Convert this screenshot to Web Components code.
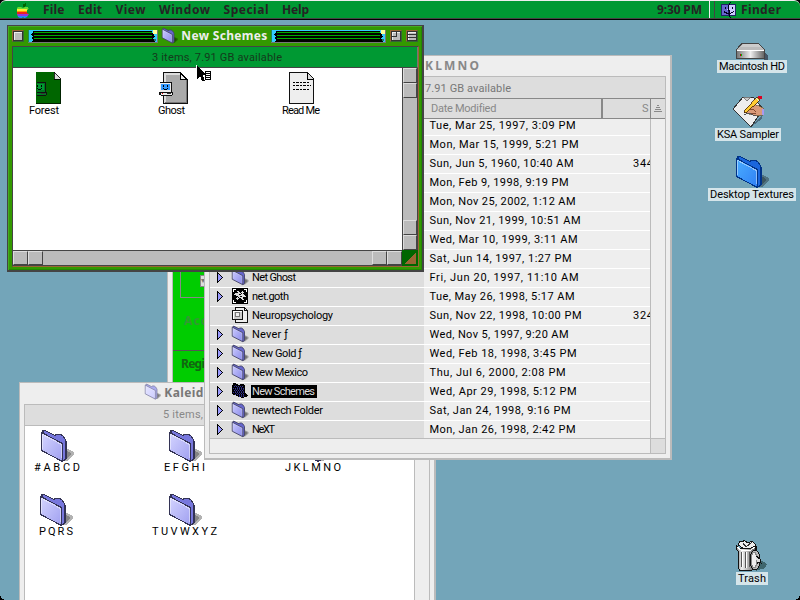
<!DOCTYPE html>
<html lang="en">
<head>
<meta charset="utf-8">
<title>Finder</title>
<style>
html,body{margin:0;width:800px;height:600px;overflow:hidden;background:#73a5b9}
</style>
</head>
<body>
<mac-desktop></mac-desktop>
<script>
const folder=(a,b,c,o,s)=>`<defs><linearGradient id="f" x2="1" y2="1"><stop stop-color="${a}"/><stop offset="1" stop-color="${b}"/></linearGradient></defs><path d="M25 18l8 4v3l-7 6h-4z" fill="#000" opacity=".3"/><path d="M25 20l5 3v2l-5 4z" fill="#000" opacity=".25"/><path d="M2 .6h2l10 5 1-1.500h4l3 2 2 3 1 2v18l-3 2-2-1L2 9z" fill="${c}" stroke="${o}" stroke-width="${s}"/><path d="M.5 2.500L21.500 13.500V31.500L.5 20.500z" fill="url(#f)" stroke="${o}" stroke-width="${s}"/><path d="M1.800 19V4.500l18.200 9.800v14" fill="none" stroke="#fff" opacity=".45"/>`;
const face=(a,b,x,y,k='#d00')=>`<g transform="translate(${x} ${y})"><path d="M1 0h11l1 1v9h1v3h-1v1H2v-1H0v-3h1z" fill="#111"/><path d="M1 1h11v9H1z" fill="${b}"/><path d="M2 2h9v6H2z" fill="${a}"/><path d="M4 3h1v2H4zM8 3h1v2H8zM4 6h1v1H4zM5 7h3v1H5zM8 6h1v1H8z" fill="#000"/><path d="M2 11h11v2H2z" fill="${b}"/><path d="M3 11h1v1H3z" fill="${k}"/><path d="M8 11h4v1H8z" fill="#333"/></g>`;
const ICONS={
 folder:[32,32,folder('#d5d5ff','#9f9ff0','#7777dd','#335',1.1)],
 blue:[32,32,folder('#4aadff','#3080f5','#1a66dd','#003388',1.1)],
 small:[32,32,folder('#ccccff','#8888e8','#6666cc','#446',1.8)],
 faded:[32,32,folder('#e6e6ff','#ccccff','#aaaaee','#8888aa',1.8)],
 selected:[16,16,`<path d="M0 2h1V0h2l4 2h1V1h3l2 2v7l2 1 1 2-2 1h-2v1h-2l-3-1-2-1-3-1-2-1z" fill="#000"/><path d="M2 3.500h9M1 5.500h11M2 7.500h10M1 9.500h11M3 11.500h9M7 13.500h6" stroke="#339" stroke-dasharray="1 1"/><path d="M2 2.500h3M4 4.500h7M2 6.500h10M2 8.500h10M3 10.500h9M6 12.500h6" stroke="#226" stroke-dasharray="1 1" stroke-dashoffset="1"/>`],
 goth:[16,16,`<path d="M0 0h16v16H0z"/><path d="M1 1h3v1H2v2H1zM12 1h3v3h-1V2h-2zM1 12h1v2h2v1H1zM14 12h1v3h-3v-1h2z" fill="#fff"/><path d="M5 3h2l1 2 2-2 2 1-1 2 3 2-1 1h-2l1 3h-2l-2-2-3 2-1-2 2-2-4-1 1-2h3z" fill="#ddd"/><path d="M7 6h2v1H7zM8 8h2v1H8zM6 9h1v1H6zM9 5h1v1H9z"/>`],
 clip:[16,16,`<path d="M3.5.5h9l3 3v12h-12z" fill="#eee" stroke="#111"/><path d="M12.500.5v3h3" fill="none" stroke="#111"/><path d="M.5 3.500h10v9H.5z" fill="#ccc" stroke="#111"/><path d="M1 4h9v1H2v7H1z" fill="#fff"/><path d="M3.500 5.500h4v4h-4z" fill="#eee" stroke="#777"/>`],
 tri:[8,11,`<path d="M0 0l6 5v1L0 11z"/><path d="M1 2v7l3.500-3.500z" fill="#99f"/>`],
 forest:[26,32,`<path d="M0 0h18l7 8v23H0z" fill="#060"/><path d="M24.500 8v23.500H0" fill="none" stroke="#020"/><path d="M18 0l7 7h-7z" fill="#ddd" stroke="#000" stroke-width=".8"/><svg x="1" y="10" width="12" height="15">${face('#093','#072',-4,0,'#063')}</svg>`],
 ghost:[30,32,`<path d="M4.500.5h17l7 7v24h-24z" fill="#aaa" stroke="#111"/><path d="M5 1h2v30H5zM5 1h16v2H5z" fill="#ddd"/><path d="M27 8h1v23H6v-1h21z" fill="#777"/><path d="M21.500 1v6h6z" fill="#eee" stroke="#000"/>${face('#39f','#eee',0,10)}`],
 doc:[26,32,`<path d="M.5.5h18l6 6v25H.5z" fill="#eee" stroke="#111"/><path d="M18.500 1v6h6" fill="#ddd" stroke="#000"/><path d="M4 10.500h16M4 13.500h18M4 17.500h16" stroke="#000" stroke-width="1" stroke-dasharray="2 1 3 1" fill="none"/>`],
 hd:[32,17,`<defs><linearGradient id="h"><stop stop-color="#777"/><stop offset=".5" stop-color="#eee"/><stop offset="1" stop-color="#666"/></linearGradient></defs><path d="M28 9l4 4v4h-4z" fill="#456"/><path d="M5 0h18l6 7v9H0V7z" fill="#444"/><path d="M6 1h17l5 6H1z" fill="#bbb"/><path d="M7 1h15l3 3H4z" fill="#ccc"/><path d="M1 7h27v8H1z" fill="url(#h)"/><path d="M1 7h27v1H1z" fill="#fff"/><path d="M4 11h1v2H4z" fill="#b00"/><path d="M5 11h1v2H5z" fill="#0b0"/>`],
 ksa:[33,32,`<path d="M20 30l10-7v-4z" fill="#345" opacity=".6"/><path d="M11 1h10l10 12-12 18L1 13z" fill="#eee" stroke="#333"/><path d="M11 1l4 4 4-4z" fill="#ccc" stroke="#555" stroke-width=".7"/><path d="M13 16l4-6 5-2 9 4v7l-7 1-7-2z" fill="#d99a78" stroke="#653" stroke-width=".7"/><path d="M15 12l7 2 2 2M18 17l6 0" stroke="#854a30" fill="none"/><path d="M30 13h2v6h-2z" fill="#a9e"/><path d="M25 1l3 3-13 12-3 1 1-3z" fill="#fc3" stroke="#420" stroke-width=".8"/><path d="M26 0h4v3h-3z" fill="#d02"/><path d="M24 2l3 3" stroke="#eee"/><path d="M12 19l4-2 8 3" stroke="#555" fill="none"/>`],
 trash:[34,33,`<defs><linearGradient id="t"><stop stop-color="#777"/><stop offset=".3" stop-color="#eee"/><stop offset=".65" stop-color="#aaa"/><stop offset="1" stop-color="#555"/></linearGradient></defs><path d="M24 20l8 5-2 4-9 3z" fill="#244" opacity=".65"/><path d="M3 6l2-4 3 1 1-2 4 3 4-2 3 3 2 5-9 2z" fill="#eee" stroke="#111"/><path d="M8 4l3 4 6-5" fill="none" stroke="#333"/><path d="M1.500 6.500l3 3h11l5-3v4l-1 1v17l-3 3H5l-2-3V12l-2-2z" fill="url(#t)" stroke="#111"/><path d="M2 8l4 3h10l4-3" fill="none" stroke="#fff"/><path d="M6.500 13v15M10.500 13v16M14.500 13v15" stroke="#555"/><path d="M7.500 13v15M11.500 13v16" stroke="#fff"/><ellipse cx="20" cy="21" rx="5" ry="10" fill="#bbb" stroke="#111"/><ellipse cx="19" cy="21" rx="3" ry="7.500" fill="#eee" stroke="#888"/><path d="M21 17l4 3 1 4-3-1-1 2" fill="#ddd" stroke="#111"/>`],
 apple:[14,15,`<defs><clipPath id="a"><path d="M2 4h3l2 1 2-1h3v1h1l-2 2v3l2 1-2 3-2 1H8l-1-1-1 1H4l-2-1-1-3V5z"/></clipPath></defs><path d="M7 4V1l3-1v2L8 4z" fill="#060"/><g clip-path="url(#a)"><path d="M0 4h14v2H0z" fill="#6d3"/><path d="M0 6h14v2H0z" fill="#fe3"/><path d="M0 8h14v1H0z" fill="#f90"/><path d="M0 9h14v2H0z" fill="#e22"/><path d="M0 11h14v2H0z" fill="#93d"/><path d="M0 13h14v2H0z" fill="#28f"/></g>`],
 finder:[15,16,`<path d="M0 2h15v12H0z" fill="#226"/><path d="M1 3h7l-1 5v5H1z" fill="#66c"/><path d="M8 3h6v10H8V8H6z" fill="#ccf"/><path d="M4 5h1v2H4zM11 5h1v2h-1zM3 9h1v1h2v1h4v-1h2V9h1v1h-1v1h-2v1H5v-1H3z" fill="#002"/><path d="M9.500 0L7.500 4v4.500h1V14l1 2" fill="none" stroke="#002"/>`],
 cursor:[16,18,`<path d="M0 0v15h2l2-2 2 4h4l-3-6h5z" fill="#fff"/><path d="M1 1v13l3-3 2 5h3L7 10h4z"/><path d="M9 6h6v9H9z" fill="#000"/><path d="M10 7h4v1h-4zM10 9h4v1h-4zM10 11h4v1h-4zM10 13h4v1h-4z" fill="#fff"/>`],
 sort:[8,8,`<path d="M3 0h2v1H3zM2 2h4v1H2zM1 4h6v1H1zM0 6h8v1H0z" fill="#888"/>`]
};
const put=(el,html)=>{el.attachShadow({mode:'open'}).innerHTML=html};

class MacIcon extends HTMLElement{connectedCallback(){
 const [w,h,p]=ICONS[this.getAttribute('name')],s=+this.getAttribute('scale')||1;
 put(this,`<style>:host{display:block;flex:none;width:${w*s}px;height:${h*s}px}svg{display:block;overflow:visible}svg svg{overflow:hidden}</style><svg width="${w*s}" height="${h*s}" viewBox="0 0 ${w} ${h}" shape-rendering="${s===1?'crispEdges':'auto'}">${p}</svg>`)}}

/* A single line of text whose tracking is set so that it fills a given width. */
class FitText extends HTMLElement{connectedCallback(){
 const w=+this.getAttribute('w'),b=this.hasAttribute('bold');
 put(this,`<style>:host{display:block;flex:none;width:${w}px;white-space:pre;font:${b?'bold 12px/14px "Noto Sans"':'11px/14px Roboto'},sans-serif}span{display:inline-block}</style><span><slot></slot></span>`);
 const s=this.shadowRoot.querySelector('span'),n=this.textContent.length;
 s.style.letterSpacing=((w-s.getBoundingClientRect().width)/Math.max(1,n-1))+'px'}}

class MenuBar extends HTMLElement{connectedCallback(){
 put(this,`<style>:host{display:flex;box-sizing:border-box;height:20px;background:#093;border-top:1px solid #eee;border-bottom:1px solid #000;box-shadow:inset 0 -1px #444;color:#242424;border-radius:6px 6px 0 0;padding:2px 19px 0 16px}
 .l{display:flex;gap:13.500px;flex:1}.l mac-icon{margin-right:-.5px}.sep{width:1px;height:17px;margin-top:-2px;background:#eee;margin-left:7px;margin-right:4px}.sep+.sep{background:#444;margin:-2px 6px 0 0}.f{margin:-1px 5px 0 0}</style>
 <div class="l"><mac-icon name="apple"></mac-icon><fit-text bold w="21.5">File</fit-text><fit-text bold w="24">Edit</fit-text><fit-text bold w="30">View</fit-text><fit-text bold w="51">Window</fit-text><fit-text bold w="45">Special</fit-text><fit-text bold w="27">Help</fit-text></div>
 <fit-text bold w="45">9:30 PM</fit-text><i class="sep"></i><i class="sep"></i><mac-icon class="f" name="finder"></mac-icon><fit-text bold w="40">Finder</fit-text>`)}}

class TitleStripe extends HTMLElement{connectedCallback(){
 const w=+this.getAttribute('w');
 put(this,`<style>:host{display:block;flex:none;width:${w}px;height:13px}svg{display:block}</style><svg width="${w}" height="13" shape-rendering="crispEdges"><path d="M0 0h${w}v13H0z" fill="#777"/><path d="M0 0h1v12H0z" fill="#285"/><path d="M1 0h${w-2}v12H1z" fill="#3cf"/><path d="M5 1h${w-11}v2l3 1-2 1 2 2-3 1 3 2v2H3l3-2-3-2 2-1-2-3 2-1z" fill="#000"/><path d="M6 3h${w-12}M6 6h${w-12}M6 9h${w-12}" transform="translate(0 -.5)" stroke="#0a0"/><path d="M${w-5} 0h4v4h-4z" fill="#ff9"/><path d="M${w-4} 9h2v2h-2z" fill="#276"/></svg>`)}}

class TitleButton extends HTMLElement{connectedCallback(){
 const k=this.getAttribute('kind');
 put(this,`<style>:host{display:block;flex:none;box-sizing:border-box;width:12px;height:12px;border:1px solid;border-color:#963 #363 #363 #963}svg{display:block}</style><svg width="10" height="10" shape-rendering="crispEdges"><path d="M0 0h10v10H0z" fill="#333"/><path d="M1 1h8v8H1z" fill="#bbb"/><path d="M1 1h8v1H2v7H1z" fill="#eee"/>${k==='zoom'?'<path d="M1 5.500h4.500V1" fill="none" stroke="#333"/>':k==='shade'?'<path d="M0 3.500h10M0 6.500h10" stroke="#333"/>':''}</svg>`)}}

class FileItem extends HTMLElement{connectedCallback(){
 const a=n=>this.getAttribute(n);
 put(this,`<style>:host{display:flex;flex-direction:column;align-items:center;width:${+a('w')+4}px}mac-icon{margin-left:${a('nudge')||0}px}fit-text{margin-top:${a('gap')||0}px;padding:0 2px;color:#000}:host([desk]) fit-text{background:#d5e5ea;line-height:13px;height:13px}</style><mac-icon name="${a('icon')}"></mac-icon><fit-text w="${a('w')}">${a('label')}</fit-text>`)}}

class SchemeWindow extends HTMLElement{connectedCallback(){
 put(this,`<style>:host{display:flex;flex-direction:column;box-sizing:border-box;width:417px;height:247px;background:#390;border:1px solid #444;border-right-width:2px;border-bottom-width:2px;box-shadow:inset 1px 1px #4a2,inset -1px -1px #280}
 header{display:flex;height:20px;align-items:center;padding-left:4px;flex:none}header fit-text{color:#eee;margin:0 4px}header title-stripe+mac-icon{margin-left:4px}title-stripe{margin-left:4px}fit-text+title-stripe{margin-left:0}header title-button+title-button{margin-left:4px}.z{margin-left:4px}
 main{margin:0 3px 3px 4px;border:1px solid #444;border-right-color:#963;border-bottom-color:#963;flex:1;display:grid;grid-template:21px 1fr 16px/1fr 16px}
 .info{grid-column:1/3;background:#093;border:1px solid #777;border-width:0 1px 1px 0;border-bottom-color:#444;box-sizing:border-box;display:flex;padding:4px 0 0 139px;color:#143a1c}
 .files{background:#fff;display:flex;padding:4px 0 0 14px;align-items:flex-start}
 .v{background:#bbb;border:solid #444;border-width:0 1px;display:flex;flex-direction:column}.h{background:#bbb;border:solid #444;border-width:1px 0;display:flex}
 .b{box-sizing:border-box;width:15px;height:15px;flex:none;background:#bbb;border:1px solid;border-color:#ddd #444 #444 #ddd}.g{flex:1}
 .v .b{width:14px}.h .b{height:14px}
 .c{background:linear-gradient(135deg,transparent 50%,#963 50%) 3px 2px/11px 12px no-repeat #060}
 .f2{margin-left:95px}.f3{margin-left:93px}</style>
 <header><title-button></title-button><title-stripe w="130"></title-stripe><mac-icon name="small" scale=".48"></mac-icon><fit-text bold w="86">New Schemes</fit-text><title-stripe w="115"></title-stripe><title-button class="z" kind="zoom"></title-button><title-button kind="shade"></title-button></header>
 <main><div class="info"><fit-text w="130">3 items, 7.91 GB available</fit-text></div>
 <div class="files"><file-item icon="forest" nudge="9" label="Forest" w="30"></file-item><file-item class="f2" icon="ghost" nudge="5" label="Ghost" w="27"></file-item><file-item class="f3" icon="doc" nudge="2" label="Read Me" w="38"></file-item></div>
 <div class="v"><i class="b"></i><i class="b"></i><i class="g"></i><i class="b"></i><i class="b"></i></div>
 <div class="h"><i class="b"></i><i class="b"></i><i class="g"></i><i class="b"></i><i class="b"></i></div><div class="c"></div></main>`)}}

const ROWS=[['','','Tue, Mar 25, 1997, 3:09 PM',146],['','','Mon, Mar 15, 1999, 5:21 PM',149],['','','Sun, Jun 5, 1960, 10:40 AM',144,0,'344'],['','','Mon, Feb 9, 1998, 9:19 PM',139],['','','Mon, Nov 25, 2002, 1:12 AM',146],['','','Sun, Nov 21, 1999, 10:51 AM',151],['','','Wed, Mar 10, 1999, 3:11 AM',148],['','','Sat, Jun 14, 1997, 1:27 PM',142],
['small','Net Ghost','Fri, Jun 20, 1997, 11:10 AM',149,44],['goth','net.goth','Tue, May 26, 1998, 5:17 AM',145,37],['clip','Neuropsychology','Sun, Nov 22, 1998, 10:00 PM',152,81,'324'],['small','Never ƒ','Wed, Nov 5, 1997, 9:20 AM',139,36],['small','New Gold ƒ','Wed, Feb 18, 1998, 3:45 PM',147,50],['small','New Mexico','Thu, Jul 6, 2000, 2:08 PM',136,56],['selected','New Schemes','Wed, Apr 29, 1998, 5:12 PM',147,63],['small','newtech Folder','Sat, Jan 24, 1998, 9:16 PM',141,71],['small','NeXT','Mon, Jan 26, 1998, 2:42 PM',146,23]];

class ListRow extends HTMLElement{connectedCallback(){
 const [ic,name,date,w,nw,size]=ROWS[+this.getAttribute('i')];
 put(this,`<style>:host{display:flex;height:19px;flex:none;box-sizing:border-box;border-bottom:1px solid #fff;background:#eee}
 .n{width:214px;height:100%;background:#ddd;display:flex;align-items:center;box-sizing:border-box;padding-left:7px;flex:none}.t{width:15px;flex:none;margin-top:-1px}.k{width:20px;flex:none;margin-top:-2px}fit-text{color:#000}
 .s{background:#000;padding:0 2px 0 1px;margin-left:-1px;height:13px;line-height:12px;overflow:hidden;margin-top:-1px}.s fit-text{color:#ddd;margin-top:0}.d{margin:2px 0 0 5.500px}.z{margin:2px 0 0 auto;width:17px;overflow:hidden}</style>
 <div class="n">${ic?`<div class="t">${ic!=='clip'?'<mac-icon name="tri"></mac-icon>':''}</div><div class="k"><mac-icon name="${ic}" scale="${ic==='small'?'.5':1}"></mac-icon></div><div class="${ic==='selected'?'s':''}"><fit-text w="${nw}">${name}</fit-text></div>`:''}</div><div class="d"><fit-text w="${w}">${date}</fit-text></div>${size?`<div class="z"><fit-text w="20">${size}</fit-text></div>`:''}`)}}

class ListWindow extends HTMLElement{connectedCallback(){
 put(this,`<style>:host{display:flex;flex-direction:column;box-sizing:border-box;width:468px;height:405px;background:#eee;border:1px solid #bbb;border-right-width:2px;border-bottom-width:2px;padding:0 4px 4px}
 header{height:20px;flex:none;color:#888;padding:3px 0 0 216px;box-sizing:border-box}
 .p{flex:1;border:1px solid #bbb;display:flex;flex-direction:column;min-height:0}
 .i{height:21px;flex:none;background:#ddd;color:#777;padding:5px 0 0 215px;box-sizing:border-box}
 .c{height:21px;flex:none;box-sizing:border-box;display:flex;background:#ddd;border:1px solid #888;border-width:1px 0;color:#888}.c div{box-sizing:border-box}.c1{width:214px;border-right:1px solid #888}.c2{width:179px;border-right:2px solid #888;padding:3px 0 0 7px}.c3{width:47px;padding:3px 0 0 39px;overflow:hidden}.c4{border-left:1px solid #888;padding:6px 3px}
 .r{display:flex;height:319px;flex:none}.rows{width:440px;display:flex;flex-direction:column;overflow:hidden}.v{border-left:1px solid #bbb;flex:1}list-row:first-child{margin-top:-2px}
 .h{flex:1;border-top:1px solid #bbb;display:flex}.h i{width:440px;border-right:1px solid #bbb}.h b{flex:1;background:#ddd}</style>
 <header><fit-text bold w="54">KLMNO</fit-text></header><div class="p"><div class="i"><fit-text w="86">7.91 GB available</fit-text></div><div class="c"><div class="c1"></div><div class="c2"><fit-text w="65">Date Modified</fit-text></div><div class="c3"><fit-text w="7">S</fit-text></div><div class="c4"><mac-icon name="sort"></mac-icon></div></div>
 <div class="r"><div class="rows">${ROWS.map((_,i)=>`<list-row i="${i}"></list-row>`).join('')}</div><div class="v"></div></div><div class="h"><i></i><b></b></div></div>`)}}

class ArchiveWindow extends HTMLElement{connectedCallback(){
 put(this,`<style>:host{display:flex;flex-direction:column;box-sizing:border-box;width:417px;height:230px;background:#eee;border:1px solid #bbb;border-right-width:2px;padding:0 4px}
 header{height:20px;flex:none;display:flex;padding:1px 0 0 121px;color:#777}header fit-text{margin:2px 0 0 4px}
 .p{flex:1;border:1px solid #bbb;display:flex;flex-direction:column}.i{height:21px;flex:none;box-sizing:border-box;background:#ddd;border-bottom:1px solid #bbb;color:#888;padding:3px 0 0 138px}
 .b{flex:1;display:flex}.f{box-sizing:border-box;width:389px;background:#fff;display:grid;grid-template-columns:128px 128px 128px;grid-auto-rows:64px;padding-top:4px;align-items:start}.v{border-left:1px solid #bbb;flex:1}</style>
 <header><mac-icon name="faded" scale=".48"></mac-icon><fit-text bold w="39">Kaleid</fit-text></header><div class="p"><div class="i"><fit-text w="40">5 items,</fit-text></div><div class="b"><div class="f">
 <file-item gap="-1" icon="folder" label="#ABCD" w="46" style="margin-left:7px"></file-item><file-item gap="-1" icon="folder" label="EFGHI" w="41" style="margin-left:9px"></file-item><file-item gap="-1" icon="folder" label="JKLMNO" w="56" style="margin-left:2px"></file-item><file-item gap="-1" icon="folder" label="PQRS" w="34" style="margin-left:12px"></file-item><file-item gap="-1" icon="folder" label="TUVWXYZ" w="65" style="margin-left:-3px"></file-item></div><div class="v"></div></div></div>`)}}

class RegisterWindow extends HTMLElement{connectedCallback(){
 put(this,`<style>:host{display:block;box-sizing:border-box;width:200px;height:200px;background:#eee;border:1px solid #bbb;padding:0 4px}.p{height:100%;border-left:1px solid #bbb;background:#0c0;display:flex;flex-direction:column}
 .x{height:97px;margin-left:7px;box-sizing:border-box;border:1px solid #888;display:flex;padding:73px 0 0 19px}.k{width:12px;height:10px;border:1px solid #888;background:#ddd;color:#777;font:8px/10px "DejaVu Sans",sans-serif}.a{padding:16px 0 0 11px;height:36px;color:#393}.r{border-top:1px solid #555;color:#161;padding:6px 0 0 8px}</style>
 <div class="p"><div class="x"><div class="k">▾</div></div><div class="a"><fit-text bold w="23">Acc</fit-text></div><div class="r"><fit-text bold w="24">Regi</fit-text></div></div>`)}}

class MacDesktop extends HTMLElement{connectedCallback(){
 put(this,`<style>:host{display:block;position:relative;width:800px;height:600px;overflow:hidden;background:linear-gradient(#000 0 10px,#73a5b9 10px)}
 register-window,archive-window,list-window,scheme-window,file-item,.cur{position:absolute}
 register-window{left:167px;top:200px}archive-window{left:19px;top:382px}list-window{left:204px;top:55px}scheme-window{left:7px;top:25px}.cur{left:196px;top:65px}
 .k{position:absolute;bottom:0;width:6px;height:6px}</style>
 <menu-bar></menu-bar>
 <file-item desk icon="hd" label="Macintosh HD" w="66" style="left:717px;top:43px"></file-item>
 <file-item desk icon="ksa" label="KSA Sampler" w="62" style="left:715px;top:96px"></file-item>
 <file-item desk icon="blue" label="Desktop Textures" w="84" style="left:708px;top:156px"></file-item>
 <file-item desk icon="trash" label="Trash" w="28" style="left:736px;top:539px"></file-item>
 <register-window></register-window><archive-window></archive-window><list-window></list-window><scheme-window></scheme-window>
 <mac-icon class="cur" name="cursor"></mac-icon>
 <i class="k" style="left:0;background:radial-gradient(circle at 6px 0,transparent 6px,#000 6px)"></i><i class="k" style="right:0;background:radial-gradient(circle at 0 0,transparent 6px,#000 6px)"></i>`)}}

[['mac-icon',MacIcon],['fit-text',FitText],['menu-bar',MenuBar],['title-stripe',TitleStripe],['title-button',TitleButton],['file-item',FileItem],['scheme-window',SchemeWindow],['list-row',ListRow],['list-window',ListWindow],['archive-window',ArchiveWindow],['register-window',RegisterWindow],['mac-desktop',MacDesktop]].forEach(([n,c])=>customElements.define(n,c));
</script>
</body>
</html>
